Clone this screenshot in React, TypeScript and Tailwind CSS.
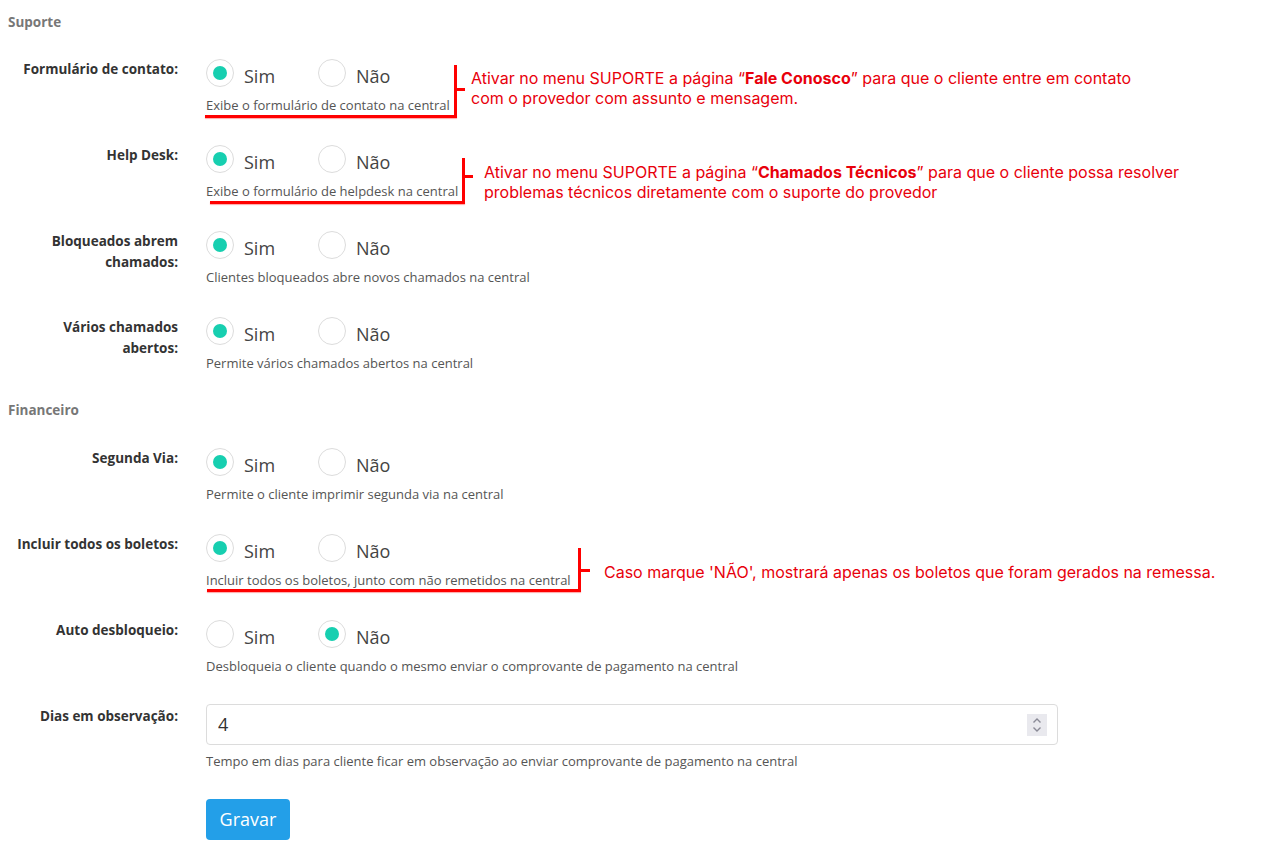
import { useState } from "react";

type Note = {
  underline: string;
  vertical: string;
  tick: string;
  text: string;
  content: React.ReactNode;
};

type Field = {
  key: string;
  label: React.ReactNode;
  help: string;
  note?: Note;
};

const suporte: Field[] = [
  {
    key: "contato",
    label: "Formulário de contato:",
    help: "Exibe o formulário de contato na central",
    note: {
      underline: "left-[-1px] top-[58px] w-[252px] h-[3px]",
      vertical: "left-[248px] top-[8px] w-[3px] h-[53px]",
      tick: "left-[251px] top-[31px] w-[8px] h-[3px]",
      text: "left-[265px] top-[11px]",
      content: (
        <>
          Ativar no menu SUPORTE a página “<b>Fale Conosco</b>” para que o cliente entre em contato
          <br />
          com o provedor com assunto e mensagem.
        </>
      ),
    },
  },
  {
    key: "helpdesk",
    label: "Help Desk:",
    help: "Exibe o formulário de helpdesk na central",
    note: {
      underline: "left-[4px] top-[58px] w-[255px] h-[3px]",
      vertical: "left-[256px] top-[15px] w-[3px] h-[46px]",
      tick: "left-[259px] top-[32px] w-[8px] h-[3px]",
      text: "left-[278px] top-[19px]",
      content: (
        <>
          Ativar no menu SUPORTE a página “<b>Chamados Técnicos</b>” para que o cliente possa resolver
          <br />
          problemas técnicos diretamente com o suporte do provedor
        </>
      ),
    },
  },
  {
    key: "bloqueados",
    label: (
      <>
        Bloqueados abrem
        <br />
        chamados:
      </>
    ),
    help: "Clientes bloqueados abre novos chamados na central",
  },
  {
    key: "varios",
    label: (
      <>
        Vários chamados
        <br />
        abertos:
      </>
    ),
    help: "Permite vários chamados abertos na central",
  },
];

const financeiro: Field[] = [
  {
    key: "segunda",
    label: "Segunda Via:",
    help: "Permite o cliente imprimir segunda via na central",
  },
  {
    key: "todos",
    label: "Incluir todos os boletos:",
    help: "Incluir todos os boletos, junto com não remetidos na central",
    note: {
      underline: "left-[1px] top-[57px] w-[374px] h-[3px]",
      vertical: "left-[372px] top-[16px] w-[3px] h-[44px]",
      tick: "left-[375px] top-[37px] w-[9px] h-[3px]",
      text: "left-[398px] top-[30px]",
      content: <>Caso marque 'NÃO', mostrará apenas os boletos que foram gerados na remessa.</>,
    },
  },
  {
    key: "auto",
    label: "Auto desbloqueio:",
    help: "Desbloqueia o cliente quando o mesmo enviar o comprovante de pagamento na central",
  },
];

function Radio({ checked, label, onClick }: { checked: boolean; label: string; onClick: () => void }) {
  return (
    <button type="button" onClick={onClick} className="flex items-center w-[112px] h-8 text-left">
      <span className="w-[28px] h-[28px] rounded-full border border-[#dcdcdc] bg-white flex items-center justify-center shrink-0">
        {checked && <span className="w-[14px] h-[14px] rounded-full bg-[#17cfb0]"></span>}
      </span>
      <span className="relative top-[3px] ml-[10px] text-[18px] leading-[24px] text-[#444]">{label}</span>
    </button>
  );
}

function Row({ label, children, help, note }: { label: React.ReactNode; children: React.ReactNode; help: string; note?: Note }) {
  return (
    <div className="flex pb-[29px]">
      <div className="w-[178px] pl-[10px] pt-[2px] text-right text-[13.5px] leading-[21px] font-bold text-[#333]">
        {label}
      </div>
      <div className="relative ml-[28px] flex-1">
        {children}
        <div className="mt-[7px] text-[13px] leading-[18px] text-[#555]">{help}</div>
        {note && (
          <>
            <div className={`absolute bg-[#ff0000] shadow-[0_1px_1px_rgba(255,0,0,0.35)] ${note.underline}`}></div>
            <div className={`absolute bg-[#ff0000] ${note.vertical}`}></div>
            <div className={`absolute bg-[#ff0000] ${note.tick}`}></div>
            <div
              className={`absolute whitespace-nowrap text-[16px] leading-[20px] text-[#e8000b] ${note.text}`}
              style={{ fontFamily: "Inter, 'Liberation Sans', sans-serif" }}
            >
              {note.content}
            </div>
          </>
        )}
      </div>
    </div>
  );
}

export default function App() {
  const [values, setValues] = useState<Record<string, boolean>>({
    contato: true,
    helpdesk: true,
    bloqueados: true,
    varios: true,
    segunda: true,
    todos: true,
    auto: false,
  });
  const [dias, setDias] = useState("4");

  const set = (k: string, v: boolean) => setValues(prev => ({ ...prev, [k]: v }));

  const renderField = (f: Field) => (
    <Row key={f.key} label={f.label} help={f.help} note={f.note}>
      <div className="flex">
        <Radio checked={values[f.key]} label="Sim" onClick={() => set(f.key, true)} />
        <Radio checked={!values[f.key]} label="Não" onClick={() => set(f.key, false)} />
      </div>
    </Row>
  );

  return (
    <div
      className="min-h-screen w-full bg-white pt-[13px]"
      style={{ fontFamily: "'Open Sans', 'Noto Sans', sans-serif" }}
    >
      {/* Suporte */}
      <h3 className="pl-[8px] text-[13.5px] leading-[18px] font-bold text-[#777]">Suporte</h3>
      <div className="mt-[26px]">{suporte.map(renderField)}</div>

      {/* Financeiro */}
      <h3 className="pl-[8px] text-[13.5px] leading-[18px] font-bold text-[#777]">Financeiro</h3>
      <div className="mt-[27px]">
        {financeiro.map(renderField)}

        <Row label="Dias em observação:" help="Tempo em dias para cliente ficar em observação ao enviar comprovante de pagamento na central">
          <div className="flex items-center w-[852px] h-[41px] border border-[#dcdcdc] rounded-[4px] bg-white pl-[11px] pr-[10px]">
            <input
              value={dias}
              onChange={e => setDias(e.target.value)}
              className="flex-1 outline-none text-[18px] text-[#333] bg-transparent"
            />
            <div className="w-[20px] h-[22px] bg-[#e9e9ee] flex flex-col items-center justify-center">
              <svg width="10" height="16" viewBox="0 0 10 16" fill="none" stroke="#8a8a96" strokeWidth="1.4">
                <path d="M1.5 5.5 L5 2 L8.5 5.5" />
                <path d="M1.5 10.5 L5 14 L8.5 10.5" />
              </svg>
            </div>
          </div>
        </Row>

        <div className="ml-[206px]">
          <button type="button" className="h-[41px] w-[84px] rounded-[4px] bg-[#239fe8] text-white text-[18px]">
            Gravar
          </button>
        </div>
      </div>
    </div>
  );
}
